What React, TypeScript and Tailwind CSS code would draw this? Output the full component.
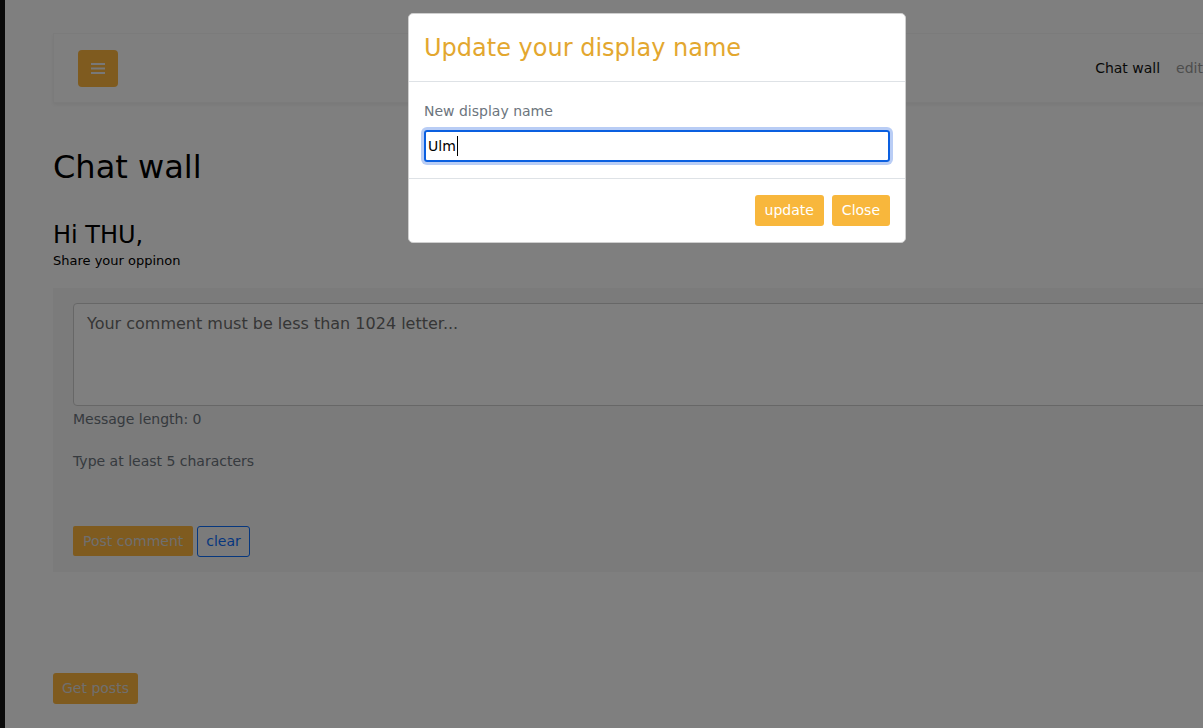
import React from "react";

const font = { fontFamily: '"DejaVu Sans", "Noto Sans", sans-serif' };

export default function App() {
  return (
    <div className="relative w-[1203px] h-[728px] overflow-hidden bg-white flex" style={font}>
      <div className="w-[5px] h-full bg-[#141414] shrink-0" />
      <div className="flex-1 min-w-0 overflow-hidden">
        <div className="w-[1300px] pl-[48px] pt-[33px]">
          {/* Navbar */}
          <div className="h-[70px] bg-white shadow-[0_2px_4px_rgba(0,0,0,0.06)] border border-[#f6f6f6] flex items-center pl-[24px] pr-[101px]">
            <button className="w-[40px] h-[37px] rounded-[4px] bg-[#feb63e] flex items-center justify-center">
              <svg width="14" height="13" viewBox="0 0 14 13">
                <rect x="0" y="1" width="14" height="2" fill="#f0f0f0" />
                <rect x="0" y="5.5" width="14" height="2" fill="#f0f0f0" />
                <rect x="0" y="10" width="14" height="2" fill="#f0f0f0" />
              </svg>
            </button>
            <div className="ml-auto flex items-center gap-[16px] text-[14px]">
              <span className="text-[#111]">Chat wall</span>
              <span className="text-[#9a9a9a]">edit</span>
            </div>
          </div>

          <h1 className="mt-[45px] text-[32px] leading-[38px] text-black font-normal">Chat wall</h1>
          <h2 className="mt-[35px] text-[24px] leading-[29px] text-black">Hi THU,</h2>
          <p className="text-[13px] leading-[18px] text-black mt-[2px]">Share your oppinon</p>

          <div className="mt-[18px] bg-[#f6f6f6] h-[284px] pl-[20px] pt-[15px]">
            <div className="h-[103px] border border-[#cfcfcf] rounded-[4px] bg-white px-[13px] pt-[8px] text-[16px] text-[#6c6c6c]">
              Your comment must be less than 1024 letter...
            </div>
            <div className="text-[14px] text-[#6c757d] mt-[3px] leading-[20px]">Message length: 0</div>
            <div className="text-[14px] text-[#6c757d] mt-[22px] leading-[20px]">Type at least 5 characters</div>
            <div className="mt-[55px] flex gap-[4px]">
              <button className="h-[30px] px-[10px] bg-[#feb63e] text-[#dedede] text-[14px] rounded-[2px]">Post comment</button>
              <button className="h-[31px] px-[8px] border border-[#0d6efd] text-[#0d6efd] text-[14px] rounded-[3px]">clear</button>
            </div>
          </div>

          <button className="mt-[101px] h-[31px] px-[9px] bg-[#feb63e] text-[#dedede] text-[14px] rounded-[3px]">Get posts</button>
        </div>
      </div>

      {/* Overlay */}
      <div className="absolute inset-0 bg-black/50" />

      {/* Modal */}
      <div className="absolute left-[408px] top-[13px] w-[498px] bg-white rounded-[5px] border border-[#cfcfcf]">
        <div className="h-[68px] border-b border-[#dee2e6] px-[15px] flex items-center">
          <h3 className="text-[24px] text-[#e3a72f] font-normal">Update your display name</h3>
        </div>
        <div className="px-[15px] pt-[19px] pb-[16px] border-b border-[#dee2e6]">
          <div className="text-[14px] text-[#6c757d] leading-[20px]">New display name</div>
          <div className="mt-[9px] h-[32px] border-2 border-[#0a5fe0] rounded-[3px] ring-[3px] ring-[#b9cdf5] flex items-center px-[2px] text-[14px] text-black">
            Ulm<span className="inline-block w-[1px] h-[20px] bg-black ml-[1px]" />
          </div>
        </div>
        <div className="h-[63px] flex items-center justify-end gap-[8px] px-[15px]">
          <button className="h-[31px] px-[10px] bg-[#f8b73c] text-white text-[14px] rounded-[3px]">update</button>
          <button className="h-[31px] px-[10px] bg-[#f8b73c] text-white text-[14px] rounded-[3px]">Close</button>
        </div>
      </div>
    </div>
  );
}
